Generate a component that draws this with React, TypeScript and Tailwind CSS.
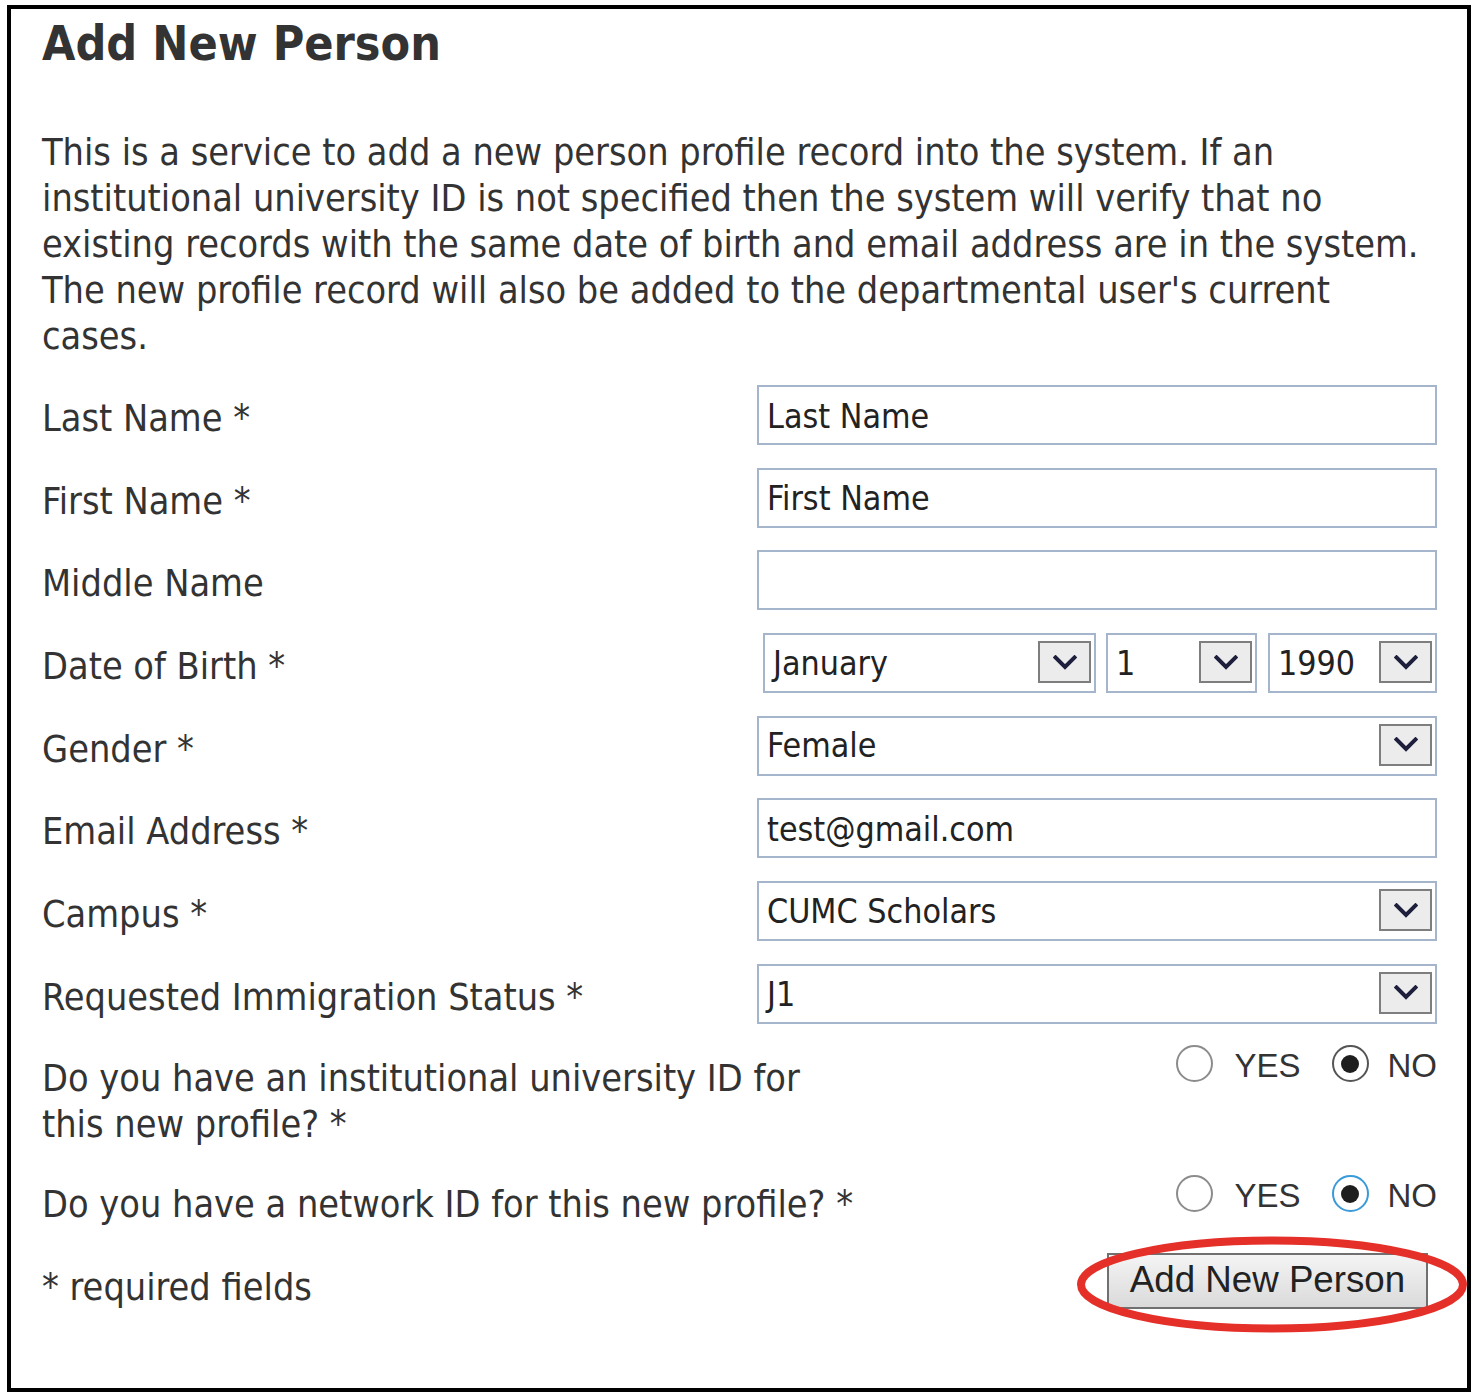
import React from 'react'

const sans = "font-[family-name:'DejaVu_Sans_Condensed','DejaVu_Sans',sans-serif] font-stretch-condensed"
const arial = "font-[family-name:'Liberation_Sans',Arial,sans-serif]"

const Chevron: React.FC = () => (
  <svg width="24" height="15" viewBox="0 0 24 15" fill="none">
    <path d="M2.5 2.5 L12 12 L21.5 2.5" stroke="#1d1f3d" strokeWidth="4" strokeLinecap="square" />
  </svg>
)

interface SelectBoxProps {
  value: string
  width: string
}

const SelectBox: React.FC<SelectBoxProps> = ({ value, width }) => (
  <div className={`flex h-[60px] items-center border-2 border-[#a5b5cb] bg-white pl-[8px] pr-[3px] ${width}`}>
    <span className="flex-1 pt-[2px] text-[33.7px] text-[#222]">{value}</span>
    <div className="mt-[-2px] flex h-[42px] w-[53px] items-center justify-center border-2 border-[#7e7e7e] bg-[#ececec]">
      <Chevron />
    </div>
  </div>
)

const TextBox: React.FC<{ value?: string }> = ({ value = '' }) => (
  <input
    readOnly
    value={value}
    className="h-[60px] w-[680px] border-2 border-[#a5b5cb] bg-white px-[8px] pt-[2px] text-[33.7px] text-[#222] outline-none"
  />
)

const Row: React.FC<{ label: string; children: React.ReactNode }> = ({ label, children }) => (
  <div className="flex h-[60px] items-center justify-between">
    <span className="pt-[6px]">{label}</span>
    {children}
  </div>
)

interface RadioProps {
  checked?: boolean
  focused?: boolean
}

const Radio: React.FC<RadioProps> = ({ checked = false, focused = false }) => (
  <span
    className={`flex h-[37px] w-[37px] items-center justify-center rounded-full border-2 bg-white ${
      focused ? 'border-[#3b9ad8]' : checked ? 'border-[#555]' : 'border-[#8c8c8c]'
    }`}
  >
    {checked && <span className="h-[18px] w-[18px] rounded-full bg-[#1e1e1e]" />}
  </span>
)

const YesNo: React.FC<{ focused?: boolean }> = ({ focused = false }) => (
  <div className={`flex items-center text-[33px] leading-[37px] text-[#333] ${arial}`}>
    <Radio />
    <span className="ml-[21px] pt-[3px]">YES</span>
    <span className="ml-[31px]">
      <Radio checked focused={focused} />
    </span>
    <span className="ml-[19px] pt-[3px]">NO</span>
  </div>
)

export default function App() {
  return (
    <div className="min-h-[1400px] bg-white pl-[7px] pt-[5px]">
      <div className={`h-[1387px] w-[1464px] border-4 border-black pl-[31px] pr-[30px] pt-[10px] text-[#333] ${sans}`}>
        <h1 className="text-[48px] font-bold leading-[49px] text-[#333]">Add New Person</h1>

        <p className="mt-[61px] text-[37.5px] leading-[46px]">
          This is a service to add a new person profile record into the system. If an
          <br />
          institutional university ID is not specified then the system will verify that no
          <br />
          existing records with the same date of birth and email address are in the system.
          <br />
          The new profile record will also be added to the departmental user's current
          <br />
          cases.
        </p>

        <div className="mt-[26px] flex flex-col gap-[22.7px] text-[37.5px]">
          <Row label="Last Name *">
            <TextBox value="Last Name" />
          </Row>
          <Row label="First Name *">
            <TextBox value="First Name" />
          </Row>
          <Row label="Middle Name">
            <TextBox />
          </Row>
          <Row label="Date of Birth *">
            <div className="flex w-[680px] justify-end">
              <SelectBox value="January" width="w-[333px]" />
              <div className="ml-[10px]">
                <SelectBox value="1" width="w-[151px]" />
              </div>
              <div className="ml-[11px]">
                <SelectBox value="1990" width="w-[169px]" />
              </div>
            </div>
          </Row>
          <Row label="Gender *">
            <SelectBox value="Female" width="w-[680px]" />
          </Row>
          <Row label="Email Address *">
            <TextBox value="test@gmail.com" />
          </Row>
          <Row label="Campus *">
            <SelectBox value="CUMC Scholars" width="w-[680px]" />
          </Row>
          <Row label="Requested Immigration Status *">
            <SelectBox value="J1" width="w-[680px]" />
          </Row>
        </div>

        <div className="mt-[19.7px] flex items-start justify-between text-[37.5px] leading-[46px]">
          <p className="mt-[11px]">
            Do you have an institutional university ID for
            <br />
            this new profile? *
          </p>
          <YesNo />
        </div>

        <div className="mt-[27px] flex items-start justify-between text-[37.5px] leading-[46px]">
          <p className="mt-[7px]">Do you have a network ID for this new profile? *</p>
          <YesNo focused />
        </div>

        <div className="mt-[25px] flex items-start justify-between text-[37.5px] leading-[46px]">
          <p className="mt-[12px]">* required fields</p>
          <div className="relative mr-[9px] mt-[1px]">
            <button
              className={`h-[56px] w-[321px] border-2 border-[#707070] bg-gradient-to-b from-[#f4f4f4] to-[#dadada] text-[36.7px] leading-none text-[#222] ${arial}`}
            >
              Add New Person
            </button>
            <svg
              className="pointer-events-none absolute left-[-31px] top-[-17px]"
              width="392"
              height="97"
              viewBox="0 0 392 97"
              fill="none"
            >
              <ellipse cx="196" cy="48.5" rx="191" ry="44" stroke="#e5302a" strokeWidth="8" />
            </svg>
          </div>
        </div>
      </div>
    </div>
  )
}
